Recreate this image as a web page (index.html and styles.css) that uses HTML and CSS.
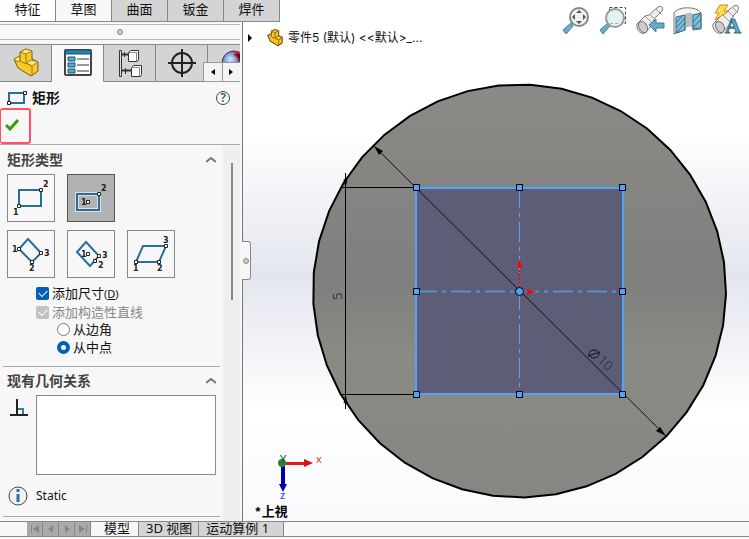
FILE: index.html
```html
<!DOCTYPE html>
<html lang="zh-CN">
<head>
  <meta charset="UTF-8" />
  <meta name="viewport" content="width=device-width, initial-scale=1.0"/>
  <title>零件5</title>
  <link rel="stylesheet" href="styles.css">
</head>
<body>

<!-- Command tabs -->
<nav class="command-tabs">
  <button class="command-tab first">特征</button>
  <button class="command-tab active">草图</button>
  <button class="command-tab">曲面</button>
  <button class="command-tab">钣金</button>
  <button class="command-tab">焊件</button>
</nav>

<main class="workspace">
  <!-- Property manager -->
  <aside class="panel">
    <div class="grip"><span class="dot"></span></div>

    <div class="panel-tabs">
      <button class="panel-tab" aria-label="Feature tree">
        <svg width="28" height="30" viewBox="0 0 28 30" stroke-linejoin="round">
          <path d="M2 11l6-3V4l6-3 6 2v8l6 3v9l-7 5L6 20z" fill="#f7ca2a" stroke="#7b5a10"/>
          <path d="M8 4l6-3 6 2-6 3zM14 15l5-3 7 2-6 4zM2 11l6-3v5l-2 1z" fill="#fbe58a" stroke="#a67c15"/>
          <path d="M14 6v9l6 3v10M8 8v5l6 3" fill="none" stroke="#a67c15"/>
        </svg>
      </button>
      <button class="panel-tab active" aria-label="Properties">
        <svg width="28" height="28" viewBox="0 0 28 28">
          <rect x="1" y="1" width="26" height="25" rx="1" fill="#fff" stroke="#444" stroke-width="2"/>
          <path d="M1 1h26v4H1z" fill="#2b7fa8" stroke="#17506c"/>
          <path d="M4 8h7v4H4zM4 14h7v4H4zM4 20h7v4H4z" fill="#5aa7cc" stroke="#17506c"/>
          <path d="M13 10h12M13 16h12M13 22h12" stroke="#333"/>
        </svg>
      </button>
      <button class="panel-tab" aria-label="Configurations">
        <svg width="24" height="29" viewBox="0 0 24 29" fill="#fff" stroke="#333">
          <path d="M1.500 1.500h2v26h-2z" fill="#ddd"/>
          <path d="M4 5.500h6M4 21.500h9" stroke-width="2"/>
          <path d="M6.500 3v5M7.500 19v6"/>
          <path d="M10.500 3.500l2-2h8v9l-1 2h-9zM13.500 18.500l2-2h8v9l-1 2h-9z"/>
          <path d="M10.500 3.500h8v9M13.500 18.500h8v9" fill="none" stroke="#888"/>
        </svg>
      </button>
      <button class="panel-tab" aria-label="Dimensions">
        <svg width="28" height="28" viewBox="0 0 28 28" fill="none" stroke="#222" stroke-width="2">
          <circle cx="14" cy="14" r="10"/>
          <path d="M14 0v28M0 14h28"/>
        </svg>
      </button>
      <button class="panel-tab last" aria-label="Appearance">
        <svg width="26" height="26" viewBox="0 0 26 26">
          <defs>
            <radialGradient id="ball" cx="35%" cy="35%"><stop offset="0" stop-color="#d9e8ff"/><stop offset="1" stop-color="#1e4fb5"/></radialGradient>
          </defs>
          <circle cx="13" cy="13" r="12" fill="url(#ball)" stroke="#333"/>
          <path d="M15 2c6 1 10 5 10 12h-7c0-4-1-7-4-9z" fill="#222" stroke="#d4243c" stroke-width="2"/>
        </svg>
      </button>
      <div class="tab-scroll">
        <button aria-label="Previous"><svg width="4" height="6"><path d="M4 0v6L0 3z"/></svg></button>
        <button aria-label="Next"><svg width="4" height="6"><path d="M0 0v6l4-3z"/></svg></button>
      </div>
    </div>

    <header class="panel-title">
      <svg width="20" height="16" viewBox="0 0 20 16">
        <path d="M2 3h15v10H2z" fill="none" stroke="#276f98" stroke-width="2"/>
        <path d="M0.500 11.500h3v3h-3zM16.500 1.500h3v3h-3z" fill="#fff" stroke="#222"/>
      </svg>
      <h1>矩形</h1>
      <button class="help" aria-label="Help">?</button>
    </header>

    <div class="confirm">
      <button class="ok" aria-label="OK">
        <svg width="14" height="12" viewBox="0 0 14 12"><path d="M1 6l4 4 8-9" fill="none" stroke="#39990f" stroke-width="3"/></svg>
      </button>
    </div>

    <div class="panel-body">
      <div class="sections">
        <section class="section">
          <div class="section-head">
            <h2>矩形类型</h2>
            <svg width="10" height="6" viewBox="0 0 10 6"><path d="M0 5l5-4 5 4" fill="none" stroke="#777" stroke-width="2"/></svg>
          </div>
          <div class="types">
            <button class="type" aria-label="Corner rectangle">
              <svg width="46" height="46" viewBox="0 0 46 46">
                <path class="shape" d="M11 15h22v16H11z"/>
                <path class="node" d="M9.500 29.500h3v3h-3zM31.500 13.500h3v3h-3z"/>
                <text x="5" y="40">1</text><text x="35" y="12">2</text>
              </svg>
            </button>
            <button class="type selected" aria-label="Center rectangle">
              <svg width="46" height="46" viewBox="0 0 46 46">
                <path d="M9 19h22v16H9z" fill="none" stroke="#ddd" stroke-width="4"/>
                <path class="shape" d="M9 19h22v16H9z"/>
                <path class="node" d="M18.500 25.500h3v3h-3zM29.500 17.500h3v3h-3z"/>
                <text x="13" y="30">1</text><text x="33" y="16">2</text>
              </svg>
            </button>
          </div>
          <div class="types">
            <button class="type" aria-label="3 point corner rectangle">
              <svg width="46" height="46" viewBox="0 0 46 46">
                <path class="shape" d="M20 8L33 22 24 31 11 18z"/>
                <path class="node" d="M9.500 16.500h3v3h-3zM31.500 20.500h3v3h-3zM22.500 29.500h3v3h-3z"/>
                <text x="4" y="21">1</text><text x="36" y="25">3</text><text x="21" y="40">2</text>
              </svg>
            </button>
            <button class="type" aria-label="3 point center rectangle">
              <svg width="46" height="46" viewBox="0 0 46 46">
                <path class="shape" d="M18 11L31 25 22 35 9 21z"/>
                <path class="node" d="M18.500 21.500h3v3h-3zM29.500 23.500h3v3h-3zM25.500 28.500h3v3h-3z"/>
                <text x="13" y="26">1</text><text x="34" y="27">3</text><text x="30" y="37">2</text>
              </svg>
            </button>
            <button class="type" aria-label="Parallelogram">
              <svg width="46" height="46" viewBox="0 0 46 46">
                <path class="shape" d="M15 15h23l-7 16H8z"/>
                <path class="node" d="M6.500 29.500h3v3h-3zM36.500 13.500h3v3h-3zM29.500 29.500h3v3h-3z"/>
                <text x="5" y="40">1</text><text x="35" y="12">3</text><text x="29" y="40">2</text>
              </svg>
            </button>
          </div>
          <div class="options">
            <label class="option"><input type="checkbox" checked><span>添加尺寸<small>(<u>D</u>)</small></span></label>
            <label class="option disabled"><input type="checkbox" checked disabled><span>添加构造性直线</span></label>
            <label class="option nested"><input type="radio" name="from"><span>从边角</span></label>
            <label class="option nested"><input type="radio" name="from" checked><span>从中点</span></label>
          </div>
        </section>

        <section class="section">
          <div class="section-head">
            <h2>现有几何关系</h2>
            <svg width="10" height="6" viewBox="0 0 10 6"><path d="M0 5l5-4 5 4" fill="none" stroke="#777" stroke-width="2"/></svg>
          </div>
          <div class="relations">
            <svg width="18" height="18" viewBox="0 0 18 18">
              <path d="M7 0v16M0 16h18" stroke="#222" stroke-width="2"/>
              <path d="M8 10h5v5" fill="none" stroke="#2f7ea8" stroke-width="2"/>
            </svg>
            <textarea aria-label="现有几何关系"></textarea>
          </div>
          <div class="status">
            <svg width="20" height="20" viewBox="0 0 20 20">
              <circle cx="10" cy="10" r="9" fill="#f2f2f2" stroke="#444"/>
              <path d="M10 3v3M10 8v8" stroke="#2a749b" stroke-width="3"/>
            </svg>
            <span>Static</span>
          </div>
        </section>
      </div>
      <div class="scrollbar"><div class="thumb"></div></div>
    </div>
  </aside>

  <!-- Graphics area -->
  <section class="viewport">
    <div class="splitter"><span class="dot"></span></div>
    <svg class="drawing" viewBox="243 22 506 499" preserveAspectRatio="xMinYMin meet">
      <defs>
        <linearGradient id="face" x1="0" y1="0" x2="0" y2="1">
          <stop offset="0" stop-color="#8a8b86"/><stop offset="0.48" stop-color="#7f807e"/><stop offset="0.65" stop-color="#898a84"/><stop offset="1" stop-color="#868782"/>
        </linearGradient>
      </defs>
      <polygon id="disc" fill="url(#face)" stroke="#000" stroke-width="2"/>
      <rect x="416" y="188" width="207" height="206" fill="#5d5d78" stroke="#4fa3ff" stroke-width="2"/>

      <!-- Centre lines -->
      <path d="M417 291.500h206" stroke="#568dd0" stroke-width="2" stroke-dasharray="20 5 4 5"/>
      <path d="M519.500 188v206" stroke="#58a2f0" stroke-dasharray="20 5 4 5"/>

      <!-- Dimensions -->
      <path d="M374 146L666 436" stroke="#111"/>
      <path d="M374 146l9 5-4 4zM666 436l-10-5 4-4z"/>
      <path d="M345.500 173v236M340 187.500h77M340 394.500h77" stroke="#000"/>
      <path d="M345.500 188l-2-9h4zM345.500 394l-2 9h4z"/>
      <text class="dim" transform="translate(342 300) rotate(-90)">5</text>
      <g fill="none" stroke="#111"><ellipse cx="594" cy="354" rx="5" ry="4"/><path d="M588 356l12-4"/></g>
      <text class="dim diameter" transform="translate(597 361) rotate(44)">10</text>

      <!-- Origin -->
      <path d="M519.500 288v-18M523 291.500h6" stroke="#f00" stroke-dasharray="3 1"/>
      <path d="M519.500 259l-2 9h5zM536 291.500l-9-2v5z" fill="#f00"/>

      <!-- Handles -->
      <g fill="#4fa3ff" stroke="#000">
        <path d="M413.500 184.500h6v6h-6zM516.500 184.500h6v6h-6zM619.500 184.500h6v6h-6zM413.500 288.500h6v6h-6zM619.500 288.500h6v6h-6zM413.500 391.500h6v6h-6zM516.500 391.500h6v6h-6zM619.500 391.500h6v6h-6z"/>
        <circle cx="519.500" cy="291.500" r="4"/>
      </g>

      <!-- View triad -->
      <path d="M283 463.500h21" stroke="#e31b1b" stroke-width="3"/>
      <path d="M304 459l9 4-9 4z" fill="#d31414"/>
      <path d="M283 463v22" stroke="#0000a8" stroke-width="4"/>
      <path d="M279 484h8l-4 8z" fill="#0000a8"/>
      <circle cx="282" cy="463" r="4" fill="#2f8040"/>
      <text class="axis" x="316" y="463" fill="#f33">x</text>
      <text class="axis" x="280" y="499" fill="#33f">z</text>
      <text class="axis" x="280" y="463" fill="#075d16">Y</text>
      <text class="view-name" x="254" y="516">*上視</text>
    </svg>

    <div class="part-name">
      <svg class="arrow" width="5" height="8"><path d="M0 0v8l4-4z"/></svg>
      <svg width="18" height="18" viewBox="0 0 28 30" stroke-width="2" stroke-linejoin="round">
        <path d="M2 11l6-3V4l6-3 6 2v8l6 3v9l-7 5L6 20z" fill="#f7ca2a" stroke="#7b5a10"/>
        <path d="M8 4l6-3 6 2-6 3zM14 15l5-3 7 2-6 4z" fill="#fbe58a" stroke="#a67c15"/>
        <path d="M14 6v9l6 3v10M8 8v5l6 3" fill="none" stroke="#a67c15"/>
      </svg>
      <span>零件5 (默认) &lt;&lt;默认&gt;_...</span>
    </div>

    <div class="view-tools">
      <button aria-label="Zoom to fit">
        <svg width="28" height="30" viewBox="0 0 28 30">
          <path d="M10 18l-8 7 3 4 7-8z" fill="#69b0cf" stroke="#477c92"/>
          <circle cx="18" cy="12" r="9" fill="#eef3f4" stroke="#888" stroke-width="2"/>
          <path d="M18 5l3 3h-6zM18 19l3-3h-6zM11 12l3-3v6zM25 12l-3-3v6z" fill="#555"/>
        </svg>
      </button>
      <button aria-label="Zoom to area">
        <svg width="30" height="30" viewBox="0 0 30 30">
          <path d="M12.500 2.500h16v16h-16z" fill="none" stroke="#444" stroke-dasharray="3 2"/>
          <path d="M11 18l-8 7 3 4 7-8z" fill="#69b0cf" stroke="#477c92"/>
          <circle cx="18" cy="13" r="9" fill="#e4f0f4" stroke="#999" stroke-width="2"/>
          <path d="M13 18.500h10" stroke="#aaa" stroke-dasharray="3 2"/>
        </svg>
      </button>
      <button aria-label="Previous view">
        <svg width="30" height="30" viewBox="0 0 30 30">
          <path d="M2 19l8-8 4-1 9-8c3-2 6 1 4 4l-8 8-1 5-8 9c-5 2-9-4-8-9z" fill="#eee" stroke="#777"/>
          <path d="M10 11l8 8M14 9l6 5M21 4l5 5" stroke="#999"/>
          <ellipse cx="8" cy="22" rx="4" ry="6" transform="rotate(-30 8 22)" fill="#ccc" stroke="#777"/>
          <path d="M14 20l7-6v4h8v5h-8v4z" fill="#62a9ca" stroke="#427c95"/>
        </svg>
      </button>
      <button aria-label="Section view">
        <svg width="30" height="30" viewBox="0 0 30 30">
          <path d="M1 8C5 1 24 1 28 8v16l-8 1V12h-8v13L1 29z" fill="#f4f4f4" stroke="#777"/>
          <path d="M12 10c2-3 8-3 8 0v13c-2-2-6-2-8 1z" fill="#bbb"/>
          <path d="M3 12l9-2v15l-9 3zM20 10l8-2v15l-8 1z" fill="#7fbcd8" stroke="#2d6d8b"/>
          <path d="M3 18l6-7M3 23l9-10M4 27l8-9M20 17l7-8M20 23l8-9" stroke="#2d6d8b"/>
        </svg>
      </button>
      <button aria-label="Dynamic annotation views">
        <svg width="32" height="32" viewBox="0 0 32 32">
          <path d="M2 20l9-9 12-9c3-2 6 1 4 4l-7 9-1 5-8 9c-5 2-10-4-9-9z" fill="#eee" stroke="#777"/>
          <path d="M12 11l8 8M17 7l6 6M22 4l5 5" stroke="#999"/>
          <ellipse cx="9" cy="23" rx="4" ry="6" transform="rotate(-30 9 23)" fill="#ccc" stroke="#777"/>
          <path d="M9 1h8l-4 6h5L4 16l4-7H4z" fill="#ffe04a" stroke="#d48028"/>
          <text class="annotation" x="14" y="29">A</text>
        </svg>
      </button>
    </div>
  </section>
</main>

<!-- Document tabs -->
<footer class="doc-bar">
  <div class="doc-nav">
    <button aria-label="First"><svg width="8" height="8"><path d="M0 0h1v8H0zM8 0v8L2 4z"/></svg></button>
    <button aria-label="Back"><svg width="8" height="8"><path d="M6 0v8L1 4z"/></svg></button>
    <button aria-label="Forward"><svg width="8" height="8"><path d="M2 0v8l5-4z"/></svg></button>
    <button aria-label="Last"><svg width="8" height="8"><path d="M7 0h1v8H7zM0 0v8l6-4z"/></svg></button>
  </div>
  <button class="doc-tab active">模型</button>
  <button class="doc-tab">3D 视图</button>
  <button class="doc-tab wide">运动算例 1</button>
</footer>

<script src="script.js"></script>
</body>
</html>
```

FILE: styles.css
```css
* {
  margin: 0;
  padding: 0;
  box-sizing: border-box;
}

body {
  display: flex;
  flex-direction: column;
  height: 100vh;
  overflow: hidden;
  background: #f7f7f7;
  color: #111;
  font-family: "Noto Sans", "Noto Sans CJK SC", sans-serif;
  font-size: 13px;
  line-height: 18px;
}

button {
  background: none;
  border: none;
  color: inherit;
  font: inherit;
}

svg {
  display: block;
  flex: none;
}

/* Command tabs */
.command-tabs {
  display: flex;
  height: 22px;
  background: #fff;
}

.command-tab {
  width: 56px;
  padding-bottom: 3px;
  background: #d4d4d4;
  border-right: 1px solid #888;
  border-bottom: 1px solid #888;
}

.command-tab.first {
  background: #fff;
}

.command-tab.active {
  background: #f7f7f7;
}

.workspace {
  display: flex;
  flex: 1;
  min-height: 0;
}

/* Property manager */
.panel {
  display: flex;
  flex-direction: column;
  width: 243px;
  padding-right: 2px;
  border-right: 1px solid #777;
}

.dot {
  width: 6px;
  height: 6px;
  background: #ccc;
  border: 1px solid #888;
  border-radius: 50%;
}

.grip {
  display: flex;
  align-items: center;
  justify-content: center;
  height: 16px;
  margin: 2px 0 4px;
  border-top: 1px solid #bbb;
  border-bottom: 1px solid #bbb;
}

.panel-tabs {
  position: relative;
  display: flex;
  height: 38px;
  overflow: hidden;
}

.panel-tab {
  display: flex;
  flex: none;
  align-items: center;
  justify-content: center;
  width: 52px;
  background: #d4d4d4;
  border: 1px solid #888;
  border-left: none;
}

.panel-tab.active {
  background: #f7f7f7;
  border-bottom-color: #f7f7f7;
}

/* Scroll buttons cover the last tab */
.tab-scroll {
  position: absolute;
  right: 0;
  bottom: 0;
  display: flex;
  gap: 1px;
  width: 37px;
  height: 20px;
  padding: 1px 0 1px 1px;
  background: #999;
}

.tab-scroll button {
  display: flex;
  flex: 1;
  align-items: center;
  justify-content: center;
  background: #f3f3f3;
}

.panel-title {
  display: flex;
  align-items: center;
  gap: 5px;
  height: 26px;
  padding: 6px 10px 0 7px;
}

.panel-title h1 {
  font-size: 14px;
  line-height: 18px;
}

.help {
  width: 14px;
  height: 14px;
  margin-left: auto;
  border: 1px solid #444;
  border-radius: 50%;
  color: #2a78a5;
  font-size: 12px;
  font-weight: bold;
  line-height: 12px;
}

.confirm {
  height: 37px;
  border-bottom: 1px solid #aaa;
}

.ok {
  width: 31px;
  height: 36px;
  padding: 0 0 2px 4px;
  border: 2px solid #ff5268;
  border-left-width: 1px;
  border-radius: 3px;
}

.panel-body {
  display: flex;
  flex: 1;
  min-height: 0;
}

.sections {
  flex: 1;
  overflow: hidden;
  padding: 1px 3px 0;
}

.scrollbar {
  width: 17px;
  padding: 18px 7px 0 8px;
  background: #efefef;
}

.thumb {
  width: 2px;
  height: 137px;
  background: #888;
}

.section {
  padding: 4px 4px 10px;
  border-bottom: 1px solid #aaa;
}

.section-head {
  display: flex;
  align-items: center;
  justify-content: space-between;
  height: 20px;
  margin-bottom: 4px;
}

.section-head h2 {
  color: #444;
  font-size: 14px;
  line-height: 20px;
}

.types {
  display: flex;
  gap: 12px;
  margin-bottom: 8px;
}

.type {
  width: 48px;
  height: 48px;
  border: 1px solid #888;
}

.type.selected {
  background: #b2b2b2;
  border-color: #555;
}

.type text {
  fill: #222;
  font-family: "DejaVu Sans", sans-serif;
  font-size: 8px;
  font-weight: bold;
}

.shape {
  fill: none;
  stroke: #276f98;
  stroke-width: 2;
}

.node {
  fill: #fff;
  stroke: #222;
}

.options {
  margin-top: -2px;
  padding-left: 29px;
}

.option {
  display: flex;
  align-items: center;
  gap: 3px;
  height: 18px;
  white-space: nowrap;
}

.option:first-child {
  margin-bottom: 2px;
}

.option.nested {
  padding-left: 21px;
}

.option.disabled {
  height: 16px;
  color: #888;
}

.option small {
  font-size: 11px;
}

.option input {
  position: relative;
  appearance: none;
  width: 13px;
  height: 13px;
  border-radius: 2px;
}

.option input[type="checkbox"] {
  background: #005fb8;
}

.option input[type="checkbox"]:disabled {
  background: #c2c2c2;
}

.option input[type="checkbox"]::after {
  content: "";
  position: absolute;
  top: 3px;
  left: 3px;
  width: 7px;
  height: 4px;
  border: solid #fff;
  border-width: 0 0 1px 1px;
  transform: rotate(-45deg);
}

.option input[type="radio"] {
  background: #fff;
  border: 1px solid #777;
  border-radius: 50%;
}

.option input[type="radio"]:checked {
  border: 4px solid #005fb8;
}

.relations {
  display: flex;
  gap: 8px;
  padding: 0 0 0 3px;
}

.relations svg {
  margin-top: 4px;
}

.relations textarea {
  flex: 1;
  min-width: 0;
  height: 80px;
  background: #fff;
  border: 1px solid #828ba0;
  resize: none;
}

.status {
  display: flex;
  align-items: center;
  gap: 8px;
  padding: 11px 1px 0;
  font-size: 12px;
}

/* Graphics area */
.viewport {
  position: relative;
  flex: 1;
  min-width: 0;
  background: linear-gradient(#fff 0%, #fff 22%, #e3e6ee 51%, #fff 78%, #f8f9fb 100%);
}

.drawing {
  width: 100%;
  height: 100%;
}

.splitter {
  position: absolute;
  top: 219px;
  left: -1px;
  display: flex;
  align-items: center;
  width: 9px;
  height: 39px;
  padding-left: 1px;
  background: #f7f7f7;
  border: 1px solid #888;
  border-left: none;
  border-radius: 0 3px 3px 0;
}

.dim {
  font-family: "Open Sans", sans-serif;
  font-size: 13px;
  font-weight: 300;
}

.dim.diameter {
  fill: #222;
}

.axis {
  font-size: 11px;
}

.annotation {
  fill: #65abc9;
  stroke: #38718d;
  font-family: "Liberation Serif", serif;
  font-size: 22px;
  font-weight: bold;
}

.view-name {
  font-family: "Liberation Mono", "Noto Sans CJK TC", monospace;
  font-size: 13px;
  font-weight: bold;
}

.part-name {
  position: absolute;
  top: 7px;
  left: 5px;
  display: flex;
  align-items: center;
  gap: 4px;
  font-family: Inter, "Noto Sans CJK SC", sans-serif;
  font-size: 12px;
  white-space: nowrap;
}

.part-name .arrow {
  margin-right: 9px;
}

.view-tools {
  position: absolute;
  top: -18px;
  right: 6px;
  display: flex;
  gap: 8px;
}

/* Document tabs */
.doc-bar {
  display: flex;
  height: 16px;
  margin-bottom: 2px;
  border-top: 1px solid #888;
  border-bottom: 1px solid #888;
}

.doc-nav {
  display: flex;
  gap: 1px;
  margin-left: 27px;
  padding-right: 1px;
  background: #888;
}

.doc-nav button {
  display: flex;
  align-items: center;
  justify-content: center;
  width: 15px;
  background: #a9aaac;
  fill: #85878a;
}

.doc-tab {
  padding: 0 6px 3px 7px;
  background: #d4d4d4;
  border-right: 1px solid #888;
  line-height: 12px;
}

.doc-tab.active {
  padding: 0 8px 3px 13px;
  background: #f7f7f7;
}

.doc-tab.wide {
  padding-right: 14px;
}
```

FILE: script.js
```javascript
// The round face is tessellated into straight segments
const sides = 41;
const points = [];

for (let i = 0; i < sides; i++) {
  const angle = (i * 360 / sides + 0.8) * Math.PI / 180;
  const x = 519.5 + 206.5 * Math.cos(angle);
  const y = 291 + 206.5 * Math.sin(angle);
  points.push(x.toFixed(1) + "," + y.toFixed(1));
}

document.getElementById("disc").setAttribute("points", points.join(" "));
```
